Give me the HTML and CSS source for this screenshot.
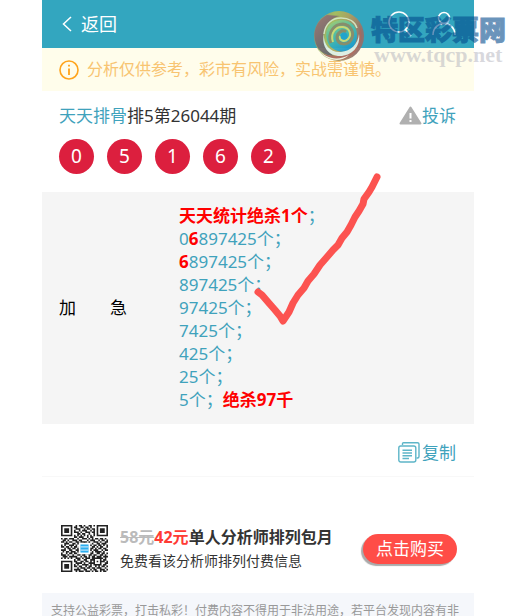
FILE: index.html
```html
<!DOCTYPE html>
<html lang="zh-CN">
<head>
    <meta charset="UTF-8">
    <meta name="viewport" content="width=device-width, initial-scale=1.0">
    <title>排5第26044期</title>
    <link rel="stylesheet" href="styles.css">
</head>
<body>

    <!-- Site watermark -->
    <div class="watermark">
        <svg class="watermark-logo" viewBox="0 0 54 54">
            <defs>
                <linearGradient id="rim" x1="0" y1="0" x2="1" y2="0.3">
                    <stop offset="0" stop-color="#8a7f7c"/>
                    <stop offset="0.4" stop-color="#a9bf5c"/>
                    <stop offset="0.65" stop-color="#b0a45e"/>
                    <stop offset="1" stop-color="#94706c"/>
                </linearGradient>
                <linearGradient id="left" x1="0" y1="0" x2="0.6" y2="1">
                    <stop offset="0" stop-color="#a5786e"/>
                    <stop offset="1" stop-color="#5f6468"/>
                </linearGradient>
                <linearGradient id="swirl" x1="0" y1="0" x2="0.5" y2="1">
                    <stop offset="0" stop-color="#b9cf63"/>
                    <stop offset="0.5" stop-color="#4fbfa8"/>
                    <stop offset="1" stop-color="#1d9ccc"/>
                </linearGradient>
            </defs>
            <circle cx="27" cy="27" r="25" fill="url(#rim)"/>
            <path d="M15 6C4 12 0 24 4 35C7 43 14 47 22 47C12 40 9 29 13 20C16 12 22 8 28 7Z" fill="url(#left)"/>
            <path d="M47 15C54 30 46 48 29 51C20 52 13 48 9 44C22 49 34 47 41 39C47 32 49 24 47 15Z" fill="#a9695c"/>
            <path d="M15 31C12 20 18 12 28 11C39 10 46 18 45 28C44 39 35 45 26 42C20 40 16 36 15 31Z" fill="url(#swirl)"/>
            <path d="M19 34C15 24 22 15 31 15C39 16 43 24 39 31C35 37 26 36 25 29C25 24 30 20 34 23" fill="none" stroke="#8c8d68" stroke-width="3"/>
            <path d="M21 33C18 24 24 17 31 18C38 19 40 26 36 30C32 34 27 31 28 27" fill="none" stroke="#d3dc72" stroke-width="2"/>
            <circle cx="32" cy="27" r="3.500" fill="#22a4cd"/>
            <path d="M12 25C11 36 19 44 29 43C39 42 46 35 47 25C49 38 39 47 28 47C17 47 9 38 12 25Z" fill="#dceee4"/>
            <path d="M6 40C14 50 26 52 37 46C28 55 12 51 6 40Z" fill="#eef2df"/>
            <path d="M12 25C13 15 20 9 29 9C37 9 43 13 45 19" fill="none" stroke="#dbe7c1" stroke-width="1.500"/>
        </svg>
        <div class="watermark-text">
            <div class="watermark-name">特区彩票网</div>
            <div class="watermark-url">www.tqcp.net</div>
        </div>
    </div>

    <!-- Header -->
    <header class="header">
        <a class="back" href="#">
            <svg width="10" height="16" viewBox="0 0 10 16"><path d="M9 1L1.500 8L9 15"/></svg>
            返回
        </a>
        <nav class="header-nav">
            <a href="#" aria-label="搜索">
                <svg width="24" height="26" viewBox="0 0 24 26"><circle cx="11" cy="11" r="10"/><path d="M17 18L23 25"/></svg>
            </a>
            <a href="#" aria-label="我的">
                <svg width="24" height="26" viewBox="0 0 24 26"><circle cx="12" cy="7" r="5.500"/><path d="M1 24C1 17 6 12.500 12 12.500S23 17 23 24"/></svg>
            </a>
        </nav>
    </header>

    <!-- Notice -->
    <div class="notice">
        <svg width="20" height="20" viewBox="0 0 20 20">
            <circle cx="10" cy="10" r="9" fill="none" stroke="#ffa41c" stroke-width="1.600"/>
            <path d="M10 8.500V15M10 4.800V6.600" stroke="#ffa41c" stroke-width="1.800"/>
        </svg>
        <span>分析仅供参考，彩市有风险，实战需谨慎。</span>
    </div>

    <main>
        <!-- Title and numbers -->
        <section class="issue">
            <div class="issue-title">
                <h1><a href="#">天天排骨</a>排5第26044期</h1>
                <a class="report" href="#">
                    <svg width="23" height="19" viewBox="0 0 23 19">
                        <path d="M11.500 1.500L21.500 17.500H1.500Z" fill="#b0b0b0" stroke="#b0b0b0" stroke-width="2" stroke-linejoin="round"/>
                        <path d="M11.500 7V12.500M11.500 14V16" stroke="#fff" stroke-width="2"/>
                    </svg>投诉</a>
            </div>
            <div class="balls">
                <span>0</span>
                <span>5</span>
                <span>1</span>
                <span>6</span>
                <span>2</span>
            </div>
        </section>

        <!-- Analysis -->
        <section class="analysis">
            <div class="analysis-label">加&emsp;&emsp;急</div>
            <div class="analysis-text">
                <b>天天统计绝杀1个</b>；<br>
                0<b>6</b>897425个；<br>
                <b>6</b>897425个；<br>
                897425个；<br>
                97425个；<br>
                7425个；<br>
                425个；<br>
                25个；<br>
                5个；<b>绝杀97千</b>
            </div>
            <svg class="tick" width="134" height="156" viewBox="0 0 134 156">
                <path d="M8 122L12 125L18 132L25 140L30 146L33 151L39 142L43 133L48 125L54 118L58 111L64 104L70 95L77 87L83 80L88 75L92 68L97 62L101 55L105 47L109 41L113 34L114 29L119 22L122 17L127 7"/>
            </svg>
        </section>

        <div class="copy">
            <button type="button">
                <svg width="22" height="21" viewBox="0 0 22 21">
                    <path d="M4.500 3V1.500Q4.500 0.700 5.500 0.700H19.500Q21 0.700 21 2V14.500Q21 16 19.500 16H18.500"/>
                    <rect x="0.800" y="4" width="17" height="16" rx="2"/>
                    <path d="M4.500 8.200H14M4.500 11H14M4.500 13.800H14M4.500 16.500H11"/>
                </svg>复制</button>
        </div>

        <!-- Monthly plan -->
        <section class="promo">
            <svg class="qr" id="qr" viewBox="0 0 29 29" role="img" aria-label="二维码"></svg>
            <div class="promo-info">
                <h2><del>58元</del><em>42元</em>单人分析师排列包月</h2>
                <p>免费看该分析师排列付费信息</p>
            </div>
            <button class="buy" type="button">点击购买</button>
        </section>
    </main>

    <footer class="footer">支持公益彩票，打击私彩！付费内容不得用于非法用途，若平台发现内容有非</footer>

    <script src="script.js"></script>
</body>
</html>
```

FILE: styles.css
```css
/* General Styles */
* {
    box-sizing: border-box;
}

body {
    position: relative;
    height: 100vh;
    margin: 0;
    padding: 0 40px 0 42px;
    overflow: hidden;
    background: #fff;
    color: #333;
    font-family: "Noto Sans", "Noto Sans CJK SC", sans-serif;
    font-size: 17px;
    line-height: 23px;
}

h1, h2, p {
    margin: 0;
}

a {
    color: #3fa2bc;
    text-decoration: none;
}

button {
    border: none;
    font: inherit;
    cursor: pointer;
}

svg {
    display: block;
    flex: none;
}

/* Watermark */
.watermark {
    position: absolute;
    z-index: 2;
    top: 9px;
    right: 8px;
    display: flex;
    gap: 5px;
    pointer-events: none;
}

.watermark-logo {
    width: 54px;
    height: 54px;
    opacity: 0.95;
}

.watermark-text {
    padding-top: 6px;
}

.watermark-name {
    color: #00488b;
    font-size: 27px;
    font-weight: 900;
    line-height: 30px;
    opacity: 0.58;
    -webkit-text-stroke: 1px #00488b;
}

.watermark-url {
    padding-left: 3px;
    color: rgba(178, 178, 188, 0.5);
    font-family: "Liberation Serif", serif;
    font-size: 22px;
    font-weight: bold;
    line-height: 20px;
}

/* Header */
.header {
    display: flex;
    align-items: center;
    justify-content: space-between;
    height: 48px;
    padding: 0 18px 0 20px;
    background: #33a6bf;
}

.header svg {
    fill: none;
    stroke: #fff;
    stroke-width: 1.5;
}

.back {
    display: flex;
    align-items: center;
    gap: 9px;
    color: #fff;
    font-size: 18px;
}

.header-nav {
    display: flex;
    gap: 20px;
}

/* Notice */
.notice {
    display: flex;
    align-items: center;
    gap: 8px;
    height: 43px;
    padding: 0 17px;
    background: #fffdeb;
    color: #f8c471;
    font-size: 16px;
    white-space: nowrap;
}

/* Title and numbers */
.issue {
    padding: 13px 18px 18px 17px;
}

.issue-title {
    display: flex;
    justify-content: space-between;
    margin-bottom: 12px;
}

.issue h1 {
    font-size: 17px;
    font-weight: normal;
}

.report {
    display: flex;
    align-items: center;
}

.balls {
    display: flex;
    gap: 13px;
}

.balls span {
    width: 35px;
    height: 35px;
    border-radius: 50%;
    background: #dc1f3e;
    color: #fff;
    font-size: 19px;
    line-height: 35px;
    text-align: center;
}

/* Analysis */
.analysis {
    position: relative;
    display: grid;
    grid-template-columns: 120px 1fr;
    align-items: center;
    padding: 12px 17px 13px;
    background: #f5f5f5;
}

.analysis-label {
    color: #000;
}

.analysis-text {
    color: #3fa2bc;
}

.analysis-text b {
    color: #f00;
}

.tick {
    position: absolute;
    top: -22px;
    left: 208px;
    fill: none;
    stroke: #fc5350;
    stroke-width: 7;
    stroke-linecap: round;
    stroke-linejoin: round;
}

/* Copy */
.copy {
    display: flex;
    justify-content: flex-end;
    padding: 17px 18px 12px;
    border-bottom: 1px solid #f8f8f8;
}

.copy button {
    display: flex;
    align-items: center;
    gap: 2px;
    padding: 0;
    background: none;
    color: #3fa2bc;
}

.copy svg {
    fill: none;
    stroke: #5db5c8;
    stroke-width: 1.4;
}

/* Monthly plan */
.promo {
    display: flex;
    align-items: center;
    padding: 48px 17px 21px 19px;
}

.qr {
    width: 47px;
    height: 47px;
}

.promo-info {
    flex: 1;
    padding-left: 12px;
    white-space: nowrap;
}

.promo h2 {
    font-size: 16px;
    line-height: 23px;
}

.promo del {
    color: #bbb;
}

.promo em {
    color: #ff3b35;
    font-style: normal;
}

.promo p {
    font-size: 14px;
    line-height: 23px;
}

.buy {
    height: 30px;
    padding: 0 13px;
    border-radius: 15px;
    background: #ff4d47;
    box-shadow: -2px 2px 1px #aaa;
    color: #fff;
    line-height: 30px;
}

/* Footer */
.footer {
    padding: 8px 9px;
    background: #f5f7fb;
    color: #999;
    font-size: 12px;
    line-height: 20px;
}
```

FILE: script.js
```javascript
// QR code modules, one string per row
let rows = [
    "11111110010110100110101111111",
    "10000010110011011010001000001",
    "10111010011100101101101011101",
    "10111010100101110010101011101",
    "10111010111010011101101011101",
    "10000010001101100100101000001",
    "11111110101010101010101111111",
    "00000000110111001011000000000",
    "10110111001001110101011011010",
    "01101001110110001011100101101",
    "11010110011011110100111010011",
    "00111001101100101101001101110",
    "10100111010011000110110110101",
    "11011010110100000101101011001",
    "00101101101000000011010110110",
    "11100110011100000110111001011",
    "01011011101001000101011110100",
    "10010110110110111011001101101",
    "11101001001101100110110011010",
    "01110111110010110101101110111",
    "10101010011101011101111111010",
    "00000000101100110011100010110",
    "11111110110011011010101011101",
    "10000010011110100111100010011",
    "10111010101001111010111110110",
    "10111010110110010110010101101",
    "10111010001011101101101110010",
    "10000010111100110010110011101",
    "11111110010111011101011010110"
];

let path = "";
rows.forEach((row, y) => {
    for (let x = 0; x < row.length; x++) {
        if (row[x] === "1") {
            path += "M" + x + " " + y + "h1v1h-1z";
        }
    }
});

document.getElementById("qr").innerHTML =
    '<path d="' + path + '" fill="#222"/>' +
    '<rect x="11" y="11" width="7" height="7" fill="#fff"/>' +
    '<rect x="12" y="12" width="5" height="5" fill="#2caef0"/>' +
    '<path d="M12 13.500h5M12 15.500h5" stroke="#b9e4fa" stroke-width="0.700"/>';
```
